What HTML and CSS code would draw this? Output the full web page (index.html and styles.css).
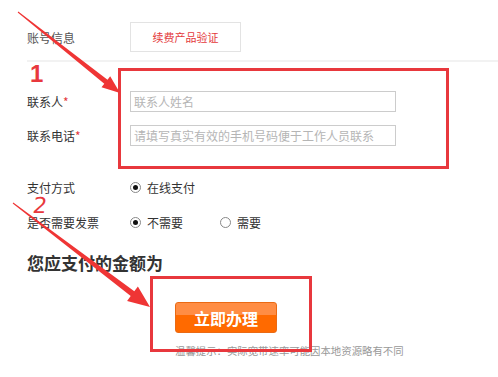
FILE: index.html
```html
<!DOCTYPE html>
<html lang="zh-CN">
<head>
    <meta charset="UTF-8">
    <meta name="viewport" content="width=device-width, initial-scale=1.0">
    <title>立即办理</title>
    <link rel="stylesheet" href="styles.css">
</head>
<body>

    <div class="page">
        <div class="account-row">
            <span class="label">账号信息</span>
            <a class="verify-btn">续费产品验证</a>
        </div>
        <div class="divider"></div>

        <form class="fields">
            <div class="field">
                <label class="label">联系人<i>*</i></label>
                <input type="text" placeholder="联系人姓名">
            </div>
            <div class="field">
                <label class="label">联系电话<i>*</i></label>
                <input type="text" placeholder="请填写真实有效的手机号码便于工作人员联系">
            </div>

            <div class="option-row pay-row">
                <span class="label">支付方式</span>
                <span class="radio checked"></span><span class="opt">在线支付</span>
            </div>
            <div class="option-row">
                <span class="label">是否需要发票</span>
                <span class="radio checked"></span><span class="opt wide">不需要</span>
                <span class="radio"></span><span class="opt">需要</span>
            </div>
        </form>

        <h2 class="amount">您应支付的金额为</h2>
        <button class="submit-btn" type="button">立即办理</button>
        <p class="tip">温馨提示：实际宽带速率可能因本地资源略有不同</p>

        <!-- annotations -->
        <span class="mark mark-1">1</span>
        <span class="mark mark-2">2</span>
        <div class="hl hl-1"></div>
        <div class="hl hl-2"></div>
        <svg class="arrows" width="498" height="377" viewBox="0 0 498 377">
            <polygon points="17.7,12.4 104.3,83.8 101.5,87.3 120,93 110.2,76.3 107.5,79.8 18.3,11.6"/>
            <polygon points="12.7,203.4 130.7,296.1 127.1,300.9 150,307 137.9,286.5 134.3,291.3 13.3,202.6"/>
        </svg>
    </div>

</body>
</html>
```

FILE: styles.css
```css
body {
    margin: 0;
    background: #fff;
    font-family: "Noto Sans CJK SC", sans-serif;
    font-size: 12px;
    color: #333;
}
.page {
    position: relative;
    height: 377px;
    padding: 22px 0 0 27px;
    box-sizing: border-box;
    overflow: hidden;
}
.label {
    width: 103px;
    flex-shrink: 0;
    color: #333;
}
.label i {
    font-style: normal;
    color: #e4393c;
}
.account-row {
    display: flex;
    align-items: center;
    height: 30px;
}
.account-row .label {
    color: #555;
}
.verify-btn {
    display: flex;
    align-items: center;
    justify-content: center;
    width: 111px;
    height: 30px;
    box-sizing: border-box;
    border: 1px solid #e3e3e3;
    color: #e4393c;
    font-size: 11px;
}
.divider {
    margin-top: 8px;
    border-top: 2px solid #f2f2f2;
}
.fields {
    margin: 29px 0 0 0;
}
.field {
    display: flex;
    align-items: center;
    height: 21px;
    margin-bottom: 13px;
}
.field input {
    width: 266px;
    height: 21px;
    box-sizing: border-box;
    border: 1px solid #ccc;
    padding: 0 3px;
    font-family: inherit;
    font-size: 12px;
    outline: none;
}
.field input::placeholder {
    color: #b5b5b5;
}
.option-row {
    display: flex;
    align-items: center;
    height: 20px;
    margin-bottom: 15px;
}
.pay-row {
    margin-top: 31px;
}
.radio {
    width: 11px;
    height: 11px;
    box-sizing: border-box;
    border: 1px solid #888;
    border-radius: 50%;
    margin-right: 6px;
    position: relative;
}
.radio.checked::after {
    content: "";
    position: absolute;
    left: 2px;
    top: 2px;
    width: 5px;
    height: 5px;
    border-radius: 50%;
    background: #111;
}
.opt {
    color: #333;
}
.opt.wide {
    width: 73px;
}
.amount {
    margin: 19px 0 0 0;
    height: 24px;
    line-height: 24px;
    font-size: 17px;
    font-weight: bold;
    color: #333;
}
.submit-btn {
    display: block;
    margin: 27px 0 0 148px;
    width: 102px;
    height: 31px;
    border: 1px solid #ea6a14;
    border-radius: 3px;
    background: linear-gradient(#ff8d44 0, #ff8d44 40%, #ff6a00 40%, #ff6a00 100%);
    color: #fff;
    font-family: inherit;
    font-size: 16px;
    font-weight: bold;
    padding: 0;
}
.tip {
    margin: 11px 0 0 148px;
    line-height: 14px;
    font-size: 10.4px;
    color: #999;
    white-space: nowrap;
}
.mark {
    position: absolute;
    color: #e8383d;
    line-height: 1;
}
.mark-1 {
    left: 30px;
    top: 62px;
    font-family: "Liberation Sans", sans-serif;
    font-weight: bold;
    font-size: 24px;
}
.mark-2 {
    left: 33px;
    top: 195px;
    font-family: "DejaVu Sans", sans-serif;
    font-size: 22px;
    transform: skewX(-8deg);
}
.hl {
    position: absolute;
    border: 3px solid #e8383d;
    box-sizing: border-box;
}
.hl-1 {
    left: 118px;
    top: 68px;
    width: 331px;
    height: 101px;
}
.hl-2 {
    left: 150px;
    top: 276px;
    width: 162px;
    height: 76px;
}
.arrows {
    position: absolute;
    left: 0;
    top: 0;
}
.arrows polygon {
    fill: #ef3535;
}
```
